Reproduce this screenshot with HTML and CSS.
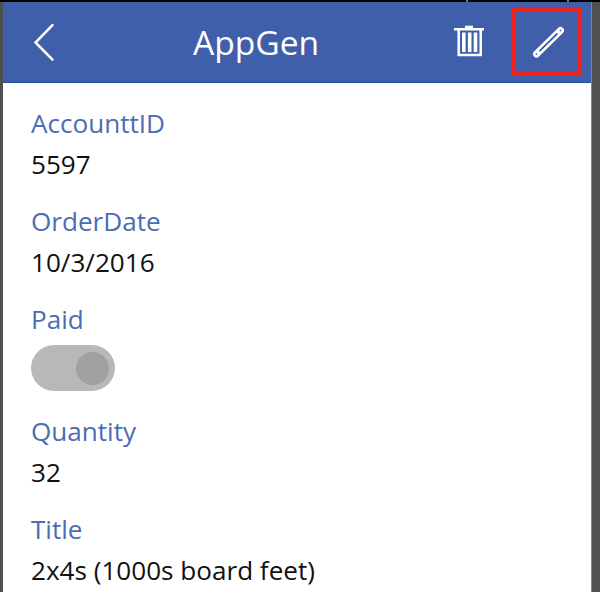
FILE: index.html
```
<!DOCTYPE html>
<html lang="en">
<head>
<meta charset="utf-8">
<title>AppGen</title>
<link rel="stylesheet" href="styles.css">
</head>
<body>
<div class="top-edge"></div>
<main class="screen">
  <header class="bar">
    <svg class="back" viewBox="0 0 24 40"><path d="M20.500 3.200 3.500 20.500 20.500 37.700"/></svg>
    <h1>AppGen</h1>
    <svg class="trash" viewBox="0 0 32 36"><path d="M1 5.200H31M12 3H20"/><path d="M5.700 6V31H27.700V6"/><path class="bars" d="M10.800 8.500V28M16.700 8.500V28M22.500 8.500V28"/></svg>
    <div class="edit"><svg class="pencil" viewBox="0 0 34 34"><path class="shaft" d="M5.500 29 29.500 5.500"/><path class="core" d="M9 25.600 26 8.900M5.500 29h.01M29.500 5.500h.01"/></svg></div>
  </header>
  <dl class="fields">
    <div class="field"><dt>AccounttID</dt><dd>5597</dd></div>
    <div class="field"><dt>OrderDate</dt><dd>10/3/2016</dd></div>
    <div class="field paid"><dt>Paid</dt><dd class="toggle"><span class="knob"></span></dd></div>
    <div class="field"><dt>Quantity</dt><dd>32</dd></div>
    <div class="field"><dt>Title</dt><dd>2x4s (1000s board feet)</dd></div>
  </dl>
</main>
</body>
</html>
```
FILE: styles.css
```
* { box-sizing: border-box; }
body { margin: 0; height: 592px; overflow: hidden; background: #505050; font-family: "Open Sans", sans-serif; }
.top-edge { height: 2px; background: linear-gradient(90deg, #000 466px, #777 466px 468px, #000 468px 567px, #777 567px 569px, #000 569px); }
.screen { height: 590px; width: 592px; border-left: 3px solid #505050; border-right: 1px solid #858585; background: #fff; }
.bar { height: 81px; display: flex; align-items: center; background: #3f5fab; border-bottom: 1px solid #2450a0; color: #fff; }
svg { flex: none; fill: none; stroke: #fff; stroke-width: 2.5; }
.back { width: 24px; height: 40px; margin-left: 29px; stroke-linecap: round; }
h1 { margin: 0 0 0 137px; width: 260px; font-size: 33.600px; font-weight: 400; line-height: 48px; }
.trash { width: 32px; height: 36px; }
.bars { stroke-width: 3.600; }
.edit { width: 70px; height: 68px; margin-left: 26px; border: 4px solid #f3201e; display: flex; align-items: center; justify-content: center; }
.pencil { width: 34px; height: 34px; margin-left: 4px; stroke-linecap: round; }
.shaft { stroke-width: 7; }
.core { stroke: #3057aa; stroke-width: 1.700; }
.fields { margin: 0; padding: 22px 0 0 28px; font-size: 26.100px; }
.field { height: 98px; }
.paid { height: 112px; }
dt { line-height: 36px; color: #4a6db5; }
dd { margin: 5px 0 0; line-height: 36px; color: #111; }
.toggle { display: flex; align-items: center; justify-content: flex-end; width: 84px; height: 46px; margin-top: 8px; padding-right: 6px; border-radius: 23px; background: #b8b8b8; }
.knob { width: 33px; height: 33px; border-radius: 50%; background: #a0a0a0; }
```
